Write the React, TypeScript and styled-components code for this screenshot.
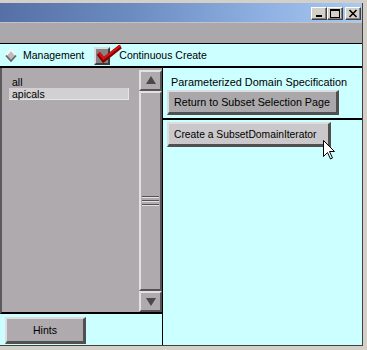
import React from "react";
import styled, { createGlobalStyle } from "styled-components";

const Global = createGlobalStyle`
  html, body { margin: 0; padding: 0; background: #d4d0c8; }
  body {
    font-family: "Liberation Sans", Arial, sans-serif;
    font-size: 10.5px;
    color: #000;
  }
  * { box-sizing: border-box; }
`;

const Frame = styled.div`
  position: relative;
  width: 367px;
  height: 350px;
  background: #d4d0c8;
  padding: 3px 4px 4px 0;
  overflow: hidden;
`;

const Window = styled.div`
  display: flex;
  flex-direction: column;
  width: 363px;
  height: 343px;
  border-right: 1px solid #404040;
  border-bottom: 1px solid #404040;
`;

const TitleBar = styled.div`
  height: 19px;
  flex: none;
  display: flex;
  justify-content: flex-end;
  align-items: flex-end;
  padding: 0 1px 2px 0;
  background: linear-gradient(to right, #5670a6 0%, #6b8bc0 35%, #8cade0 70%, #a9c9f1 100%);
`;

const CaptionButton = styled.div<{ $gap?: number }>`
  width: 16px;
  height: 13px;
  margin-left: ${(p) => p.$gap ?? 0}px;
  background: #d4d0c8;
  border-style: solid;
  border-width: 1px;
  border-color: #ffffff #404040 #404040 #ffffff;
  box-shadow: inset -1px -1px 0 #808080;
  display: flex;
  align-items: center;
  justify-content: center;
`;

const Toolbar = styled.div`
  height: 22px;
  flex: none;
  background: #aaa8aa;
  border-top: 1px solid #c4c2c4;
  border-bottom: 1px solid #000;
`;

const OptionsRow = styled.div`
  height: 24px;
  flex: none;
  display: flex;
  align-items: center;
  padding-left: 5px;
  background: #ccffff;
  border-bottom: 2px solid #000;
`;

const OptionText = styled.span`
  line-height: 12px;
  white-space: nowrap;
`;

const Diamond = styled.svg`
  display: block;
  margin-right: 6px;
`;

const CheckBox = styled.div`
  position: relative;
  width: 16px;
  height: 18px;
  margin: 1px 9px 0 10px;
  background: #858385;
  border-style: solid;
  border-width: 2px;
  border-color: #dcdcdc #3c3c3c #3c3c3c #dcdcdc;
`;

const CheckMark = styled.svg`
  position: absolute;
  left: -2px;
  top: -6px;
  overflow: visible;
`;

const Main = styled.div`
  flex: 1;
  display: flex;
  min-height: 0;
`;

const LeftColumn = styled.div`
  width: 163px;
  flex: none;
  display: flex;
  flex-direction: column;
  border-right: 1px solid #000;
`;

const ListPanel = styled.div`
  height: 246px;
  flex: none;
  display: flex;
  background: #aeaaae;
  border-left: 2px solid #5c5a5c;
  border-bottom: 2px solid #000;
`;

const List = styled.div`
  flex: 1;
  padding: 8px 10px 0 7px;
`;

const ListItem = styled.div<{ $selected?: boolean }>`
  height: 12px;
  line-height: 12px;
  padding-left: 3px;
  white-space: nowrap;
  background: ${(p) => (p.$selected ? "#d2d0d2" : "transparent")};
  border-right: 1px solid ${(p) => (p.$selected ? "#e6e6e6" : "transparent")};
  border-bottom: 1px solid ${(p) => (p.$selected ? "#e6e6e6" : "transparent")};
`;

const Scrollbar = styled.div`
  width: 23px;
  flex: none;
  display: flex;
  flex-direction: column;
  padding-top: 2px;
`;

const Bevel = `
  background: #aeaaae;
  border-style: solid;
  border-width: 2px;
  border-color: #e2e2e2 #555355 #555355 #e2e2e2;
`;

const ArrowButton = styled.div`
  height: 21px;
  flex: none;
  ${Bevel}
  display: flex;
  align-items: center;
  justify-content: center;
`;

const Triangle = styled.div<{ $down?: boolean }>`
  width: 0;
  height: 0;
  border-left: 5px solid transparent;
  border-right: 5px solid transparent;
  ${(p) =>
    p.$down
      ? "border-top: 8px solid #4a484a; margin-top: 1px;"
      : "border-bottom: 8px solid #4a484a; margin-top: -1px;"}
`;

const Thumb = styled.div`
  flex: 1;
  ${Bevel}
  display: flex;
  align-items: center;
  justify-content: center;
  padding-top: 20px;
`;

const Grip = styled.div`
  width: 17px;
  height: 10px;
  background: repeating-linear-gradient(
    to bottom,
    #555355 0px,
    #555355 1px,
    #e2e2e2 1px,
    #e2e2e2 2px,
    #aeaaae 2px,
    #aeaaae 4px
  );
`;

const HintsArea = styled.div`
  flex: 1;
  background: #ccffff;
  padding: 3px 0 0 5px;
`;

const PushButton = styled.div<{ $width: number; $face?: string; $center?: boolean; $size?: number }>`
  width: ${(p) => p.$width}px;
  height: ${(p) => (p.$center ? 27 : 25)}px;
  display: flex;
  align-items: center;
  justify-content: ${(p) => (p.$center ? "center" : "flex-start")};
  padding-left: ${(p) => (p.$center ? 0 : 5)}px;
  background: ${(p) => p.$face ?? "#aaa8aa"};
  border-style: solid;
  border-width: 2px 3px 3px 2px;
  border-color: #dedede #505050 #505050 #dedede;
  font-size: ${(p) => p.$size ?? 10.5}px;
  white-space: nowrap;
`;

const RightColumn = styled.div`
  flex: 1;
  display: flex;
  flex-direction: column;
  background: #ccffff;
`;

const SpecSection = styled.div`
  flex: none;
  padding: 8px 0 3px 4px;
  border-bottom: 2px solid #000;
`;

const SpecLabel = styled.div`
  height: 12px;
  line-height: 12px;
  margin: 0 0 2px 4px;
  font-size: 10.9px;
  white-space: nowrap;
`;

const CreateSection = styled.div`
  flex: 1;
  padding: 2px 0 0 4px;
`;

const Cursor = styled.svg`
  position: absolute;
  left: 323px;
  top: 140px;
`;

export default function App() {
  return (
    <>
      <Global />
      <Frame>
        <Window>
          <TitleBar>
            <CaptionButton>
              <svg width="10" height="9" viewBox="0 0 10 9">
                <rect x="2" y="6" width="6" height="2" fill="#000" />
              </svg>
            </CaptionButton>
            <CaptionButton>
              <svg width="10" height="9" viewBox="0 0 10 9">
                <rect x="0.5" y="0.5" width="9" height="8" fill="none" stroke="#000" />
                <rect x="0" y="0" width="10" height="2" fill="#000" />
              </svg>
            </CaptionButton>
            <CaptionButton $gap={2}>
              <svg width="10" height="9" viewBox="0 0 10 9">
                <path d="M1.5 1 L8.5 8 M8.5 1 L1.5 8" stroke="#000" strokeWidth="1.6" />
              </svg>
            </CaptionButton>
          </TitleBar>
          <Toolbar />
          <OptionsRow>
            <Diamond width="12" height="13" viewBox="0 0 12 13">
              <polygon points="6,1 11,6.5 6,12 1,6.5" fill="#bdbbbd" />
              <polyline points="1,6.5 6,1 11,6.5" fill="none" stroke="#f6f6f6" strokeWidth="1.8" />
              <polyline points="1,6.5 6,12 11,6.5" fill="none" stroke="#6a686a" strokeWidth="1.8" />
            </Diamond>
            <OptionText>Management</OptionText>
            <CheckBox>
              <CheckMark width="28" height="20" viewBox="0 0 28 20">
                <path d="M4.5 10.5 L9.5 17 L26.5 3.5" fill="none" stroke="#8a0000" strokeWidth="4.5" strokeLinejoin="miter" />
                <path d="M4.5 9.5 L9.5 15.5 L26.5 2.5" fill="none" stroke="#e01010" strokeWidth="2" />
              </CheckMark>
            </CheckBox>
            <OptionText>Continuous Create</OptionText>
          </OptionsRow>
          <Main>
            <LeftColumn>
              <ListPanel>
                <List>
                  <ListItem>all</ListItem>
                  <ListItem $selected>apicals</ListItem>
                </List>
                <Scrollbar>
                  <ArrowButton>
                    <Triangle />
                  </ArrowButton>
                  <Thumb>
                    <Grip />
                  </Thumb>
                  <ArrowButton>
                    <Triangle $down />
                  </ArrowButton>
                </Scrollbar>
              </ListPanel>
              <HintsArea>
                <PushButton $width={81} $face="#aeaaae" $center>
                  Hints
                </PushButton>
              </HintsArea>
            </LeftColumn>
            <RightColumn>
              <SpecSection>
                <SpecLabel>Parameterized Domain Specification</SpecLabel>
                <PushButton $width={172} $size={10.75}>
                  Return to Subset Selection Page
                </PushButton>
              </SpecSection>
              <CreateSection>
                <PushButton $width={164} $face="#cac8ca" $size={10.3}>
                  Create a SubsetDomainIterator
                </PushButton>
              </CreateSection>
            </RightColumn>
          </Main>
        </Window>
        <Cursor width="13" height="20" viewBox="0 0 13 20">
          <path
            d="M0.5 0.5 L0.5 16.5 L4.5 12.5 L7.5 19 L9.5 18 L6.5 11.5 L11.5 11.5 Z"
            fill="#fff"
            stroke="#000"
            strokeWidth="1"
          />
        </Cursor>
      </Frame>
    </>
  );
}
